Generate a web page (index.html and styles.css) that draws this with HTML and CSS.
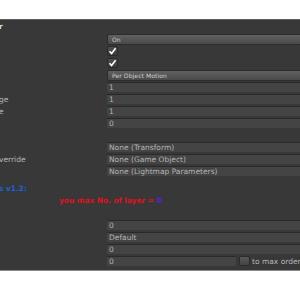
FILE: index.html
```
<!DOCTYPE html>
<html lang="en">
  <head>
    <meta charset="UTF-8" />
    <title>Renderer Inspector</title>
    <link rel="stylesheet" href="styles.css">
  </head>
  <body>
    <div class="panel">
      <div class="header">r</div>
      <div class="row"><div class="label"></div><div class="popup">On</div></div>
      <div class="row"><div class="label"></div><div class="check on"><svg viewBox="0 0 9 8" width="9" height="8"><path d="M1.5 4.2 L3.6 6.4 L7.6 1.2" fill="none" stroke="#fff" stroke-width="1.6"/></svg></div></div>
      <div class="row"><div class="label"></div><div class="check on"><svg viewBox="0 0 9 8" width="9" height="8"><path d="M1.5 4.2 L3.6 6.4 L7.6 1.2" fill="none" stroke="#fff" stroke-width="1.6"/></svg></div></div>
      <div class="row"><div class="label"></div><div class="popup">Per Object Motion</div></div>
      <div class="row"><div class="label"></div><div class="field">1</div></div>
      <div class="row"><div class="label">ge</div><div class="field">1</div></div>
      <div class="row"><div class="label">e</div><div class="field">1</div></div>
      <div class="row"><div class="label"></div><div class="field">0</div></div>
      <div class="spacer"></div>
      <div class="row"><div class="label"></div><div class="field obj">None (Transform)</div></div>
      <div class="row"><div class="label">verride</div><div class="field obj">None (Game Object)</div></div>
      <div class="row"><div class="label"></div><div class="field obj">None (Lightmap Parameters)</div></div>
      <div class="note blue">s v1.2:</div>
      <div class="note red">you max No. of layer = <span class="num">0</span></div>
      <div class="spacer"></div>
      <div class="row"><div class="label"></div><div class="field">0</div></div>
      <div class="row"><div class="label"></div><div class="field">Default</div></div>
      <div class="row"><div class="label"></div><div class="field">0</div></div>
      <div class="row">
        <div class="label"></div>
        <div class="field short">0</div>
        <div class="check"></div>
        <span class="toggle-text">to max order</span>
      </div>
    </div>
  </body>
</html>
```
FILE: styles.css
```
body {
  margin: 0;  background-color: #fff;  font-family: 'DejaVu Sans', Verdana, sans-serif;  overflow: hidden;
}
.panel {
  margin-top: 19px;  height: 250px;  background-color: #383838;  border-top: 1px solid #5e5e5e;  border-bottom: 1px solid #8a8a8a;  overflow: hidden;
}
.header {
  height: 13px;  line-height: 14px;  font-size: 7.5px;  font-weight: bold;  color: #d8d8d8;  margin-left: -1px;
}
.row {
  display: flex;  align-items: center;  height: 12px;  white-space: nowrap;
}
.label {
  width: 108px;  flex-shrink: 0;  font-size: 7.5px;  color: #b8b8b8;  overflow: hidden;  margin-left: -1px;
}
.popup {
  flex: 1;  height: 9px;  margin-right: -10px;  line-height: 9px;  font-size: 6px;  color: #cfcfcf;  padding-left: 4px;  border: 1px solid #2c2c2c;  border-radius: 2px;  background: linear-gradient(#606060, #4a4a4a);  letter-spacing: 0.1px;
}
.field {
  flex: 1;  height: 9px;  margin-right: -10px;  line-height: 10px;  font-size: 7.5px;  color: #b4b4b4;  padding-left: 2px;  border-top: 1px solid #2a2a2a;  background-color: #444;
}
.field.short {
  flex: none;  width: 127px;  margin-right: 3px;
}
.check {
  width: 9px;  height: 8px;  border-radius: 2px;  background: linear-gradient(#5a5a5a, #444);  border: 1px solid #2a2a2a;  display: flex;  align-items: center;  justify-content: center;  flex-shrink: 0;
}
.check.on {
  background: linear-gradient(#4e4e4e, #3c3c3c);
}
.check svg {
  display: block;
}
.toggle-text {
  font-size: 7.5px;  color: #b8b8b8;  margin-left: 2px;
}
.spacer {
  height: 12px;
}
.note {
  height: 12px;  line-height: 12px;  font-size: 7.4px;  font-weight: bold;  white-space: nowrap;
}
.note.blue {
  color: #1e63d6;  margin-top: 6px;  margin-left: -1px;
}
.note.red {
  color: #e0101c;  padding-left: 59px;
}
.note .num {
  color: #5a1ee0;
}
```
